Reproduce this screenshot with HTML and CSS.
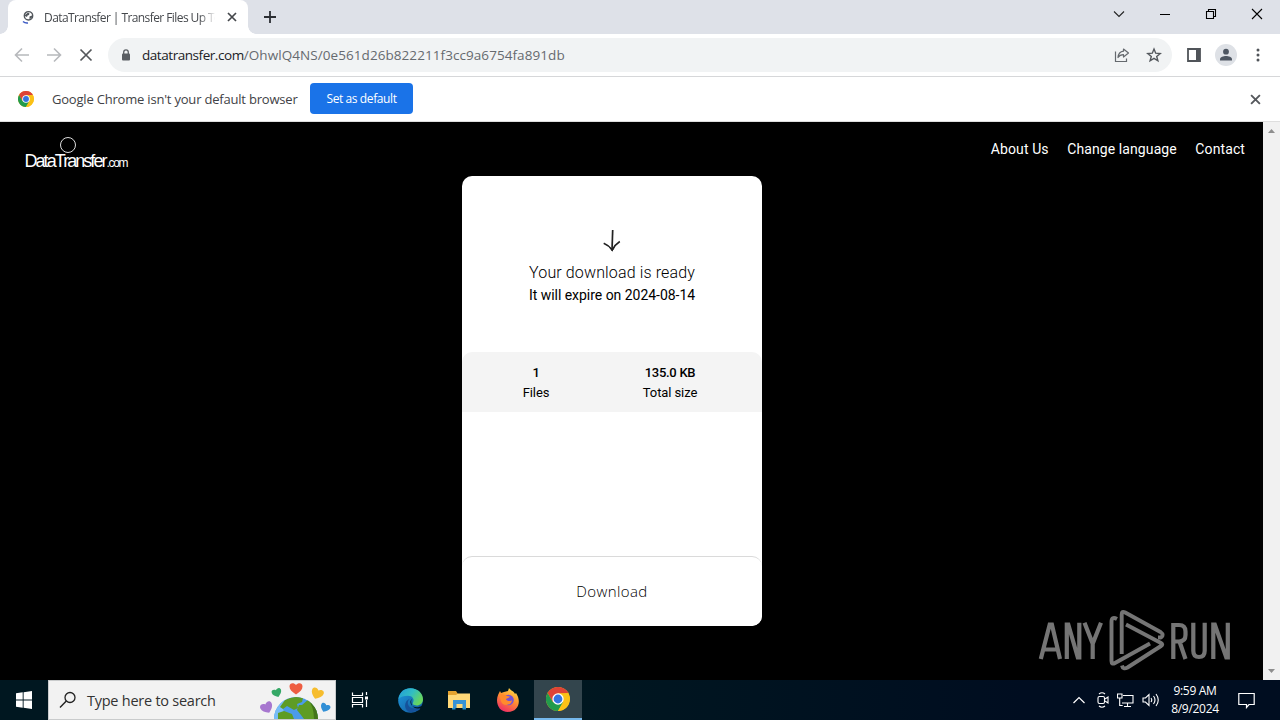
FILE: index.html
```html
<!DOCTYPE html>
<html lang="en">

<head>
    <meta charset="UTF-8">
    <meta name="viewport" content="width=device-width, initial-scale=1.0">
    <title>DataTransfer | Transfer Files Up To</title>
    <link rel="stylesheet" href="styles.css">
</head>

<body>
    <svg width="0" height="0" class="defs">
        <symbol id="chrome" viewBox="0 0 24 24">
            <circle cx="12" cy="12" r="12" fill="#fbc116" />
            <path d="M1.6 6A12 12 0 0 1 22.4 6L12 6.5 6.8 15z" fill="#de4336" />
            <path d="M1.6 6A12 12 0 0 0 12 24L17.2 15 6.8 15z" fill="#229b4c" />
            <path d="M22.4 6.5H12L17.2 15 12 24A12 12 0 0 0 22.4 6.5z" fill="#fbc116" />
            <circle cx="12" cy="12" r="5.7" fill="#fff" />
            <circle cx="12" cy="12" r="4.4" fill="#3474e0" />
        </symbol>
        <symbol id="cross" viewBox="0 0 10 10">
            <path d="M1 1l8 8M9 1L1 9" fill="none" stroke="currentColor" stroke-width="1.7" />
        </symbol>
    </svg>

    <header class="tabstrip">
        <div class="tab">
            <svg class="favicon" width="14" height="14" viewBox="0 0 14 14">
                <circle cx="7.5" cy="5.8" r="4.2" fill="#fff" stroke="#52575c" stroke-width="1.4" />
                <path d="M4 5l3-2.500 1.500 1L8 5 6.500 5.500 6 7 4 6zM8.500 6.500l2.500-1v2L8.500 9.500z" fill="#52575c" />
                <path d="M2 11.500Q4 13.300 7 12.900" fill="none" stroke="#3d5bc4" stroke-width="1.5" />
            </svg>
            <span class="tab-title">DataTransfer | Transfer Files Up To</span>
            <svg class="tab-close" width="10" height="10"><use href="#cross" /></svg>
        </div>
        <svg class="new-tab" width="12" height="12" viewBox="0 0 12 12">
            <path d="M6 0v12M0 6h12" stroke="#2b2e33" stroke-width="1.8" />
        </svg>
        <div class="window-buttons">
            <svg width="46" height="28" viewBox="0 0 46 28"><path d="M18 11.5l5 5 5-5" fill="none" stroke="#222" stroke-width="1.1" /></svg>
            <svg width="46" height="28" viewBox="0 0 46 28"><path d="M18 14.5h10" stroke="#000" /></svg>
            <svg width="46" height="28" viewBox="0 0 46 28"><path d="M18.5 11.5h7v7h-7zM20.500 11.500v-2h7v7h-2" fill="none" stroke="#000" stroke-width="1.1" /></svg>
            <svg width="46" height="28" viewBox="0 0 46 28"><path d="M18 9l10 10M28 9L18 19" stroke="#000" stroke-width="1.1" /></svg>
        </div>
    </header>

    <nav class="toolbar">
        <svg width="16" height="16" viewBox="0 0 16 16"><path d="M15 8H2M8 1.500L1.500 8 8 14.500" fill="none" stroke="#b7b9bc" stroke-width="1.6" /></svg>
        <svg width="16" height="16" viewBox="0 0 16 16"><path d="M1 8h13M8 1.500L14.500 8 8 14.500" fill="none" stroke="#b7b9bc" stroke-width="1.6" /></svg>
        <svg width="16" height="16" viewBox="0 0 16 16"><path d="M2.500 2.500l11 11M13.500 2.500l-11 11" stroke="#54575b" stroke-width="1.7" /></svg>
        <div class="omnibox">
            <svg width="10" height="12" viewBox="0 0 10 12">
                <path d="M2.700 5V3.200a2.300 2.300 0 0 1 4.600 0V5" fill="none" stroke="#5a5e63" stroke-width="1.3" />
                <rect x="1" y="4.500" width="8" height="7" rx="1" fill="#5a5e63" />
            </svg>
            <span class="url"><b>datatransfer.com</b><i>/OhwlQ4NS/0e561d26b822211f3cc9a6754fa891db</i></span>
            <svg class="share" width="16" height="16" viewBox="0 0 16 16">
                <path d="M1.500 4.500v10h11v-3" fill="none" stroke="#65696e" stroke-width="1.200" />
                <path d="M9.500 2L14.500 6 9.500 10V7.700C7 7.700 5.300 8.500 4 10.500 4.300 7 6.300 4.600 9.500 4.200z" fill="none" stroke="#65696e" stroke-width="1.200" stroke-linejoin="round" />
            </svg>
            <svg width="16" height="16" viewBox="0 0 16 16">
                <path d="M8 2l1.700 4.200 4.500.3-3.500 2.900 1.200 4.400L8 11.400l-3.900 2.400 1.200-4.400-3.500-2.900 4.500-.3z" fill="none" stroke="#54585d" stroke-width="1.400" />
            </svg>
        </div>
        <svg class="panel" width="14" height="14" viewBox="0 0 14 14"><path d="M1 1h12v12H1z" fill="#fff" stroke="#505459" stroke-width="1.800" /><path d="M9 1h4v12H9z" fill="#505459" /></svg>
        <svg class="profile" width="22" height="22" viewBox="0 0 22 22">
            <circle cx="11" cy="11" r="11" fill="#dee1e6" />
            <circle cx="11" cy="7.700" r="2.900" fill="#4d5561" />
            <path d="M5 16.500v-1.200c0-2.300 3.500-3.300 6-3.300s6 1 6 3.300v1.200z" fill="#4d5561" />
        </svg>
        <svg class="kebab" width="4" height="14" viewBox="0 0 4 14" fill="#505459"><circle cx="2" cy="2" r="1.500" /><circle cx="2" cy="7" r="1.500" /><circle cx="2" cy="12" r="1.500" /></svg>
    </nav>

    <section class="infobar">
        <svg width="16" height="16"><use href="#chrome" /></svg>
        <span class="info-text">Google Chrome isn't your default browser</span>
        <button class="set-default">Set as default</button>
        <svg class="info-close" width="11" height="11"><use href="#cross" /></svg>
    </section>

    <div class="viewport">
        <main class="page">
            <div class="page-head">
                <svg class="logo" width="106" height="34" viewBox="0 0 106 34">
                    <circle cx="43" cy="9" r="7.500" fill="none" stroke="#ddd" />
                    <text x="-.5" y="31" class="logo-name" textLength="83">DataTransfer</text>
                    <text x="81.500" y="31" class="logo-com" textLength="22">.com</text>
                </svg>
                <div class="links">
                    <a>About Us</a>
                    <a>Change language</a>
                    <a>Contact</a>
                </div>
            </div>
            <div class="card">
                <div class="ready">
                    <svg width="18" height="22" viewBox="0 0 18 22">
                        <path d="M9.700 0L9 20.500" fill="none" stroke="#222" stroke-width="1.700" />
                        <path d="M.7 13.300Q6 15.500 9.300 20 12 14.500 16.800 11.500" fill="none" stroke="#222" stroke-width="1.600" />
                        <path d="M5.500 16.500l3.800 5 2.700-4.500-2.700 2z" fill="#222" />
                    </svg>
                    <h1>Your download is ready</h1>
                    <p>It will expire on 2024-08-14</p>
                </div>
                <div class="stats">
                    <div class="stat-files"><strong>1</strong><span>Files</span></div>
                    <div class="stat-size"><strong>135.0 KB</strong><span>Total size</span></div>
                </div>
                <button class="download"><span>Download</span></button>
            </div>
        </main>
        <div class="scrollbar">
            <svg width="7" height="4" viewBox="0 0 7 4"><path d="M3.500 0L7 4H0z" fill="#8e8e8e" /></svg>
            <svg width="7" height="4" viewBox="0 0 7 4"><path d="M0 0h7L3.500 4z" fill="#8e8e8e" /></svg>
        </div>
        <svg class="watermark" width="194" height="64" viewBox="0 0 194 64">
            <g fill="none" stroke="#757575" stroke-width="4.200">
                <path d="M2.800 50L11.700 15.500h2.200L22 50M6 40.500h13.500" />
                <path d="M28.800 50V15.500h1.500L39.800 48.500h1.500V13.700" />
                <path d="M46.500 13.700l8.200 21V50M63 13.700l-8.300 21" />
                <path d="M135.300 50V16h5.700q6.500 0 6.500 6.500v3.500q0 6.500-6.500 6.500h-5.700M141.500 32.500l6 17.500" />
                <path d="M155.300 13.700v28q0 6.300 5.700 6.300t5.700-6.300v-28" />
                <path d="M175.300 50V15.500h1.500L188.300 48.500h1.500V13.700" />
                <g stroke-width="3.900" stroke-linejoin="round">
                    <path d="M79 10q-5.500-3-5.500 3V52q0 4 3.500 2L112 34.500" />
                    <path d="M83.700 45V5.500q0-4 3.500-2L122.500 23q4 3 .5 5.500h-3" />
                    <path d="M88 15.500L123 34q2.500 1.500 0 3L89.500 58.500q-4.500 2.500-5.500-2" />
                </g>
            </g>
        </svg>
    </div>

    <footer class="taskbar">
        <svg class="start" width="48" height="40" viewBox="0 0 48 40">
            <path d="M16 13.300l6.700-1v7.200H16zM23.600 12.200L32 11v8.500h-8.400zM16 20.500h6.700v7.200l-6.700-1zM23.600 20.500H32V29l-8.400-1.200z" fill="#fff" />
        </svg>
        <div class="search">
            <svg width="18" height="18" viewBox="0 0 18 18"><circle cx="11" cy="6.500" r="5" fill="none" stroke="#222" stroke-width="1.300" /><path d="M7.300 10L1 16.500" stroke="#222" stroke-width="1.400" /></svg>
            <span>Type here to search</span>
            <svg class="earth" width="72" height="38" viewBox="0 0 72 38">
                <defs>
                    <clipPath id="globe"><circle cx="36" cy="38" r="22" /></clipPath>
                    <path id="heart" d="M0 5.500C-4 3-6.500.5-6.500-2.500-6.500-6.500-2-6.500 0-4 2-6.500 6.500-6.500 6.500-2.500 6.500.5 4 3 0 5.500z" />
                </defs>
                <g clip-path="url(#globe)">
                    <path d="M14 16h44v22H14z" fill="#4b9be9" />
                    <path d="M14 30q2-12 14-13l-6 8 2 6-4 8h-6z" fill="#78bdf6" />
                    <path d="M25 19q10-5 18-2l-1 4-5 2 1 4-4 2-7-4-4 3-3-2zM42 24l7-6 8 10 2 10H44l-3-4-4-5 2-5zM18 32l6-2 8 3 2 5H18z" fill="#5e9c24" />
                    <path d="M48 18l9 11 1 9h-4q0-12-6-20z" fill="#43751a" />
                </g>
                <use href="#heart" transform="translate(36 8)" fill="#ee5e42" />
                <use href="#heart" transform="translate(17 12) rotate(-20) scale(.75)" fill="#35a866" />
                <use href="#heart" transform="translate(57 13) rotate(22) scale(.95)" fill="#f6bd2e" />
                <use href="#heart" transform="translate(7 27) rotate(-25) scale(.95)" fill="#a777cf" />
                <use href="#heart" transform="translate(65 27) rotate(25) scale(.75)" fill="#318fd6" />
            </svg>
        </div>
        <div class="app task-view">
            <svg width="18" height="18" viewBox="0 0 18 18" fill="none" stroke="#fff" stroke-width="1.200"><path d="M1.500 1.500v3h10v-3M1.500 16.500v-3h10v3M1.500 6.500h10v5h-10zM15.500 1v3M15.500 9v7" /><path d="M14 5.500h3v3h-3z" fill="#fff" stroke="none" /></svg>
        </div>
        <div class="app edge">
            <svg width="25" height="25" viewBox="0 0 24 24">
                <defs>
                    <linearGradient id="edge-top" x1="0" y1="0" x2="1" y2=".5"><stop offset="0" stop-color="#229bd9" /><stop offset=".55" stop-color="#31bdc3" /><stop offset="1" stop-color="#67d65e" /></linearGradient>
                    <linearGradient id="edge-low" x1="0" y1="0" x2="1" y2="1"><stop offset="0" stop-color="#1f9be0" /><stop offset="1" stop-color="#105598" /></linearGradient>
                </defs>
                <circle cx="12" cy="12" r="11.800" fill="url(#edge-low)" />
                <path d="M.5 10.500C1.500 4 6 .2 12 .2c7 0 12 5 12 10.500 0 4-3 6-6 6-3.500 0-4.500-1.500-3.500-3C16 11 14 7.500 9.500 7.500c-4 0-7 1-9 3z" fill="url(#edge-top)" />
                <path d="M12 10c-4 2-3.500 8.500 2.500 9.500 3 .5 6-1 8-2.500l-2 4-8 2.500C5 22 5 12 12 10z" fill="#15529b" />
                <path d="M13.500 10.500c-2.500 1.500-2 6 1.500 7.500 3 1 6 .3 8.500-1.300l1 1.500-2 1c-4 1-7.500.3-9-2.500-1.300-3-1-5.500 0-6.200z" fill="#001720" />
            </svg>
        </div>
        <div class="app">
            <svg width="22" height="20" viewBox="0 0 22 20">
                <path d="M0 1h8l2 3h12v14H0z" fill="#e4a32f" />
                <path d="M0 5h8l2-1.500h12V18H0z" fill="#ffd978" />
                <path d="M5 10h13v8h-3.500v-4h-6v4H5z" fill="#3693d5" />
                <path d="M4 18h3.500v1.500H4zM14.500 18H18v1.500h-3.500z" fill="#238fca" />
            </svg>
        </div>
        <div class="app">
            <svg width="24" height="24" viewBox="0 0 24 24">
                <defs><linearGradient id="fox" x1=".8" y1="0" x2=".3" y2="1"><stop offset="0" stop-color="#ffe14a" /><stop offset=".45" stop-color="#ff9230" /><stop offset="1" stop-color="#f02c66" /></linearGradient></defs>
                <path d="M1 12C1 8 3 5 4 3l1 2 3-1 4-1 1-3c2 3 5 3 6 6l1-1c6 9 2 19-8 19C5 24 1 19 1 12z" fill="url(#fox)" />
                <circle cx="12.500" cy="12" r="5.300" fill="#7552d4" />
                <path d="M3 7c4-2 6 0 8 1l3 .5c-1 2-4 1.500-4 3 2 2 5 2 6 .5 0 6-10 7-11 1z" fill="#ff8b2c" />
            </svg>
        </div>
        <div class="app active">
            <svg width="24" height="24"><use href="#chrome" /></svg>
        </div>
        <div class="tray">
            <svg class="more" width="12" height="8" viewBox="0 0 12 8"><path d="M.5 7L6 1.500 11.500 7" fill="none" stroke="#fff" stroke-width="1.200" /></svg>
            <svg width="12" height="16" viewBox="0 0 12 16" fill="none" stroke="#fff" stroke-width="1.100"><rect x="1" y="4.500" width="6.500" height="7" rx="1.500" /><path d="M8 7l3-2v6L8 9M2 2q3-2.500 6 0M2 14q3 2.500 6 0" /></svg>
            <svg width="17" height="14" viewBox="0 0 17 14" fill="none" stroke="#fff" stroke-width="1.100"><path d="M6 2.500h10v7.500H5M10.500 10v3M7 13.500h7M.5 1h4.500v4H.5zM2.700 5v7.500h3" /></svg>
            <svg width="18" height="14" viewBox="0 0 18 14" fill="none" stroke="#fff" stroke-width="1.100"><path d="M1 5h2.500L7 1.500v11L3.500 9H1zM9 5q1.500 2 0 4M11.500 3q3 4 0 8M14 1q4.500 6 0 12" /></svg>
            <div class="clock"><span>9:59 AM</span><span>8/9/2024</span></div>
            <svg class="notes" width="17" height="17" viewBox="0 0 17 17"><path d="M.8 1.500h15.400v11H11L8.500 15.500V12.500H.8z" fill="none" stroke="#fff" stroke-width="1.200" /></svg>
        </div>
    </footer>
</body>

</html>
```

FILE: styles.css
```css
* {
    box-sizing: border-box;
}

body {
    margin: 0;
    width: 1280px;
    height: 720px;
    overflow: hidden;
    display: flex;
    flex-direction: column;
    font-family: "Open Sans", sans-serif;
    background-color: #fff;
}

svg {
    display: block;
    flex-shrink: 0;
}

span,
a,
h1,
p {
    white-space: nowrap;
}

button {
    border: none;
    padding: 0;
    font-family: inherit;
}

.defs {
    position: absolute;
}

/* browser chrome */
.tabstrip {
    height: 34px;
    padding-left: 8px;
    display: flex;
    align-items: center;
    background-color: #dee1e8;
}

.tab {
    position: relative;
    width: 240px;
    height: 34px;
    padding: 0 11px 0 13px;
    display: flex;
    align-items: center;
    border-radius: 8px 8px 0 0;
    background-color: #fff;
}

/* curved feet of the tab */
.tab::before,
.tab::after {
    content: "";
    position: absolute;
    bottom: 0;
    width: 8px;
    height: 8px;
}

.tab::before {
    left: -8px;
    background: radial-gradient(circle at 0 0, transparent 7.5px, #fff 8px);
}

.tab::after {
    right: -8px;
    background: radial-gradient(circle at 100% 0, transparent 7.5px, #fff 8px);
}

.tab-title {
    width: 171px;
    margin-left: 9px;
    font-size: 12px;
    letter-spacing: -0.58px;
    color: #45484c;
    -webkit-mask-image: linear-gradient(90deg, #000 155px, transparent 172px);
    mask-image: linear-gradient(90deg, #000 155px, transparent 172px);
}

.tab-close {
    margin-left: 12px;
    color: #44474b;
}

.new-tab {
    margin-left: 16px;
}

.window-buttons {
    height: 34px;
    margin-left: auto;
    display: flex;
}

.toolbar {
    height: 43px;
    padding: 0 20px 0 14px;
    display: flex;
    align-items: center;
    gap: 16px;
    border-bottom: 1px solid #d6d7d9;
}

.omnibox {
    width: 1064px;
    height: 34px;
    margin-left: -2px;
    padding: 0 10px 0 13px;
    display: flex;
    align-items: center;
    border-radius: 17px;
    background-color: #f1f3f4;
}

.url {
    margin-left: 11px;
    font-size: 13.5px;
    color: #202124;
}

.url b,
.url i {
    font-weight: 400;
    font-style: normal;
}

.url b {
    letter-spacing: -0.45px;
}

.url i {
    letter-spacing: 0.07px;
    color: #666a6f;
}

.share {
    margin: 0 16px 0 auto;
}

.panel {
    margin-left: -1px;
}

.profile {
    margin-left: -2px;
}

.kebab {
    margin-left: 3px;
}

.infobar {
    height: 45px;
    padding: 0 19px 0 18px;
    display: flex;
    align-items: center;
    border-bottom: 1px solid #dedede;
}

.info-text {
    width: 246px;
    margin-left: 18px;
    font-size: 13px;
    letter-spacing: -0.2px;
    color: #3f4246;
}

.set-default {
    width: 103px;
    height: 31px;
    margin: 0 0 2px 12px;
    border-radius: 4px;
    background-color: #1a73e8;
    font-size: 12px;
    letter-spacing: -0.4px;
    color: #fff;
}

.info-close {
    margin-left: auto;
    color: #55585c;
}

/* page */
.viewport {
    position: relative;
    height: 558px;
    display: flex;
    font-family: Roboto, sans-serif;
}

.page {
    width: 1263px;
    background-color: #000;
}

.page-head {
    height: 54px;
    padding: 14px 18px 0 25px;
    display: flex;
    justify-content: space-between;
}

.logo text {
    font-family: "Liberation Sans", sans-serif;
    fill: #fff;
}

.logo-name {
    font-size: 18px;
}

.logo-com {
    font-size: 12px;
}

.links {
    height: 26px;
    display: flex;
    align-items: center;
    gap: 18.5px;
    font-size: 14px;
    letter-spacing: 0.1px;
    color: #fff;
}

.card {
    width: 300px;
    height: 450px;
    margin-left: 462px;
    display: flex;
    flex-direction: column;
    border-radius: 10px;
    overflow: hidden;
    background-color: #fff;
}

.ready {
    height: 176px;
    padding-top: 54px;
    display: flex;
    flex-direction: column;
    align-items: center;
}

.ready h1 {
    margin: 10px 0 0;
    font-size: 16px;
    font-weight: 300;
    line-height: 22px;
    letter-spacing: 0.13px;
    color: #000;
}

.ready p {
    margin: 2px 0 0;
    font-size: 14px;
    line-height: 18px;
    letter-spacing: -0.03px;
}

.stats {
    height: 60px;
    padding: 11px 0 0 60px;
    display: flex;
    border-radius: 10px 10px 0 0;
    background-color: #f4f4f4;
    font-size: 13px;
    line-height: 20px;
}

.stats div {
    display: flex;
    flex-direction: column;
    align-items: center;
}

.stats strong {
    font-weight: 500;
    letter-spacing: -0.3px;
}

.stats span {
    letter-spacing: -0.1px;
}

.stat-files {
    width: 28px;
}

.stat-size {
    width: 56px;
    margin-left: 92px;
}

.download {
    height: 70px;
    margin-top: auto;
    padding-bottom: 2px;
    border-top: 1px solid #dadada;
    border-radius: 10px;
    background-color: #fff;
    font-family: "Open Sans", sans-serif;
    font-size: 15px;
    font-weight: 300;
    letter-spacing: 0.4px;
    color: #000;
}

.scrollbar {
    width: 17px;
    padding: 7px 0;
    display: flex;
    flex-direction: column;
    justify-content: space-between;
    align-items: center;
    background-color: #f1f1f1;
}

.watermark {
    position: absolute;
    left: 1038px;
    top: 487px;
}

/* taskbar */
.taskbar {
    height: 40px;
    display: flex;
    background: linear-gradient(90deg, #001720 45%, #000d20 80%);
    color: #fff;
}

.search {
    width: 288px;
    height: 40px;
    padding-left: 10px;
    display: flex;
    align-items: center;
    border: 1px solid #c9cbcc;
    background-color: #f2f2f2;
    font-size: 14.5px;
    letter-spacing: -0.25px;
    color: #333;
}

.search span {
    margin-left: 10px;
}

.earth {
    margin-left: auto;
    margin-right: 3px;
}

.app {
    width: 49px;
    height: 40px;
    display: flex;
    justify-content: center;
    align-items: center;
}

.task-view {
    padding-right: 2px;
}

.edge {
    padding-left: 2px;
}

.active {
    width: 48px;
    margin-left: 2px;
    border-bottom: 2px solid #76b9ed;
    background-color: #33454d;
}

.tray {
    margin-left: auto;
    padding-right: 25px;
    display: flex;
    align-items: center;
}

.tray svg {
    margin-right: 8px;
}

.tray .more {
    margin-right: 12px;
}

.clock {
    width: 50px;
    margin-left: 2px;
    display: flex;
    flex-direction: column;
    align-items: center;
    font-size: 12px;
    line-height: 18px;
    letter-spacing: -0.3px;
}

.tray .notes {
    margin: 0 0 0 18px;
}
```
